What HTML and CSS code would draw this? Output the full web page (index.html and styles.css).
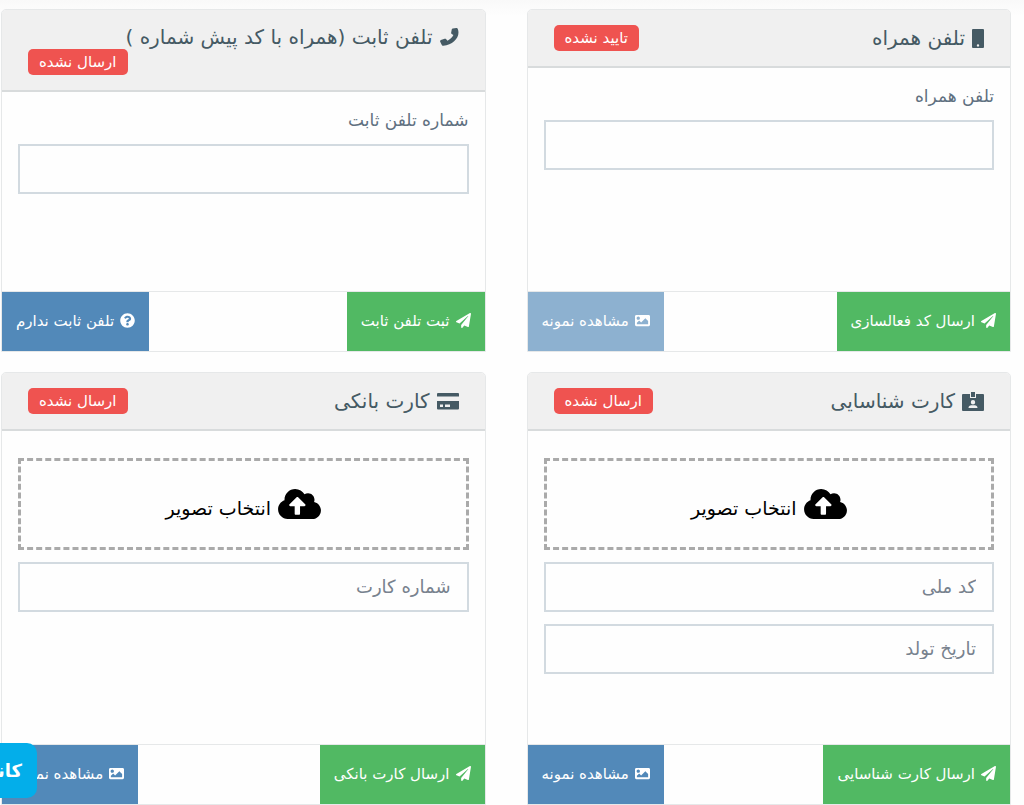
FILE: index.html
```html
<!DOCTYPE html>
<html lang="fa" dir="rtl">
<head>
<meta charset="utf-8">
<meta name="viewport" content="width=device-width, initial-scale=1">
<title>احراز هویت</title>
<link rel="stylesheet" href="styles.css">
</head>
<body>
<svg class="sprite" aria-hidden="true">
  <symbol id="plane" viewBox="0 0 512 512"><path d="M476 3.2L12.5 270.6c-18.1 10.4-15.8 35.6 2.2 43.2L121 358.4l287.3-253.2c5.5-4.9 13.3 2.6 8.6 8.3L176 407v80.5c0 23.6 28.5 32.9 42.5 15.8L282 426l124.6 52.2c14.2 6 30.4-2.9 33-18.2l72-432C515 7.8 493.3-6.8 476 3.2z"/></symbol>
  <symbol id="image" viewBox="0 0 512 512"><path d="M464 448H48c-26.5 0-48-21.500-48-48V112c0-26.500 21.500-48 48-48h416c26.500 0 48 21.500 48 48v288c0 26.500-21.500 48-48 48zM112 120c-30.900 0-56 25.100-56 56s25.100 56 56 56 56-25.100 56-56-25.100-56-56-56zM64 384h384V272l-87.500-87.500c-4.700-4.700-12.300-4.700-17 0L208 320l-55.500-55.500c-4.700-4.700-12.300-4.700-17 0L64 336v48z"/></symbol>
  <symbol id="question" viewBox="0 0 512 512"><path d="M504 256c0 137-111 248-248 248S8 393 8 256C8 119.100 119 8 256 8s248 111.100 248 248zM262.700 90c-54.500 0-89.300 23-116.600 63.800-3.500 5.300-2.400 12.400 2.700 16.200l34.700 26.300c5.200 3.900 12.600 3 16.700-2.100 17.900-22.700 30.100-35.800 57.300-35.800 20.400 0 45.700 13.100 45.700 33 0 15-12.400 22.700-32.500 34C247.100 238.500 216 254.900 216 296v4c0 6.600 5.400 12 12 12h56c6.600 0 12-5.400 12-12v-1.300c0-28.500 83.200-29.600 83.200-106.700 0-58-60.200-102-116.500-102zM256 338c-25.400 0-46 20.600-46 46s20.600 46 46 46 46-20.600 46-46-20.600-46-46-46z"/></symbol>
  <symbol id="phone" viewBox="0 0 19 18"><path d="M12.800.5L16.200 0c.7-.1 1.300.2 1.600.9 3 7.600-4.300 16-14.400 16.900-.7 0-1.300-.3-1.600-.9L.2 13.800c-.3-.7 0-1.400.7-1.700l3.700-1.300c.6-.2 1.200-.1 1.600.4l1.300 1.500c2.600-1.200 4.700-3.100 5.900-5.600L11.700 6c-.5-.4-.7-.9-.5-1.500l.6-3.200c.1-.4.5-.7 1-.8z"/></symbol>
  <symbol id="mobile" viewBox="0 0 12 19"><path fill-rule="evenodd" d="M1 0h10a1 1 0 0 1 1 1v17a1 1 0 0 1-1 1H1a1 1 0 0 1-1-1V1a1 1 0 0 1 1-1zM6 15.200a1.200 1.200 0 1 0 0 2.400 1.200 1.200 0 0 0 0-2.400z"/></symbol>
  <symbol id="card" viewBox="0 0 22 19"><path fill-rule="evenodd" d="M1 1h20a1 1 0 0 1 1 1v2.500H0V2a1 1 0 0 1 1-1zM0 9h22v7.500a1 1 0 0 1-1 1H1a1 1 0 0 1-1-1zM3 12.500V15h3v-2.500zM8 12.500V15h5v-2.500z"/></symbol>
  <symbol id="badge" viewBox="0 0 22 19"><path fill-rule="evenodd" d="M1 2h7v4h6V2h7a1 1 0 0 1 1 1v15a1 1 0 0 1-1 1H1a1 1 0 0 1-1-1V3a1 1 0 0 1 1-1zM9 0h4v5H9zM11 8a2.200 2.200 0 1 0 0 4.400A2.200 2.200 0 0 0 11 8zM6.500 16h9c0-1.800-1.200-2.800-2.700-2.800H9.200c-1.500 0-2.700 1-2.700 2.800z"/></symbol>
  <symbol id="cloud" viewBox="0 32 640 448"><path d="M537.600 226.600c4.100-10.700 6.400-22.400 6.400-34.600 0-53-43-96-96-96-19.700 0-38.100 6-53.300 16.200C367 64.200 315.300 32 256 32c-88.400 0-160 71.600-160 160 0 2.700.1 5.400.2 8.100C40.200 219.800 0 273.200 0 336c0 79.500 64.500 144 144 144h368c70.700 0 128-57.300 128-128 0-61.900-44-113.600-102.400-125.400zM393.400 288H328v112c0 8.800-7.200 16-16 16h-48c-8.800 0-16-7.200-16-16V288h-65.400c-14.300 0-21.400-17.200-11.300-27.300l105.400-105.400c6.200-6.200 16.400-6.200 22.600 0l105.400 105.400c10.100 10.100 2.900 27.300-11.300 27.300z"/></symbol>
</svg>

<main class="grid">
  <section class="card">
    <header class="card-head">
      <h2 class="title"><svg class="icon-mobile"><use href="#mobile"/></svg>تلفن همراه</h2>
      <span class="status">تایید نشده</span>
    </header>
    <div class="card-body">
      <label class="label" for="mobile-no">تلفن همراه</label>
      <input class="field" id="mobile-no" type="tel">
    </div>
    <footer class="card-foot">
      <button class="btn btn-green" type="button"><svg class="icon"><use href="#plane"/></svg>ارسال کد فعالسازی</button>
      <button class="btn btn-blue" type="button" disabled><svg class="icon"><use href="#image"/></svg>مشاهده نمونه</button>
    </footer>
  </section>

  <section class="card">
    <header class="card-head">
      <h2 class="title"><svg class="icon-phone"><use href="#phone"/></svg>تلفن ثابت (همراه با کد پیش شماره )</h2>
      <span class="status">ارسال نشده</span>
    </header>
    <div class="card-body">
      <label class="label" for="phone-no">شماره تلفن ثابت</label>
      <input class="field" id="phone-no" type="tel">
    </div>
    <footer class="card-foot">
      <button class="btn btn-green" type="button"><svg class="icon"><use href="#plane"/></svg>ثبت تلفن ثابت</button>
      <button class="btn btn-blue" type="button"><svg class="icon"><use href="#question"/></svg>تلفن ثابت ندارم</button>
    </footer>
  </section>

  <section class="card card-tall">
    <header class="card-head">
      <h2 class="title"><svg class="icon-card"><use href="#badge"/></svg>کارت شناسایی</h2>
      <span class="status">ارسال نشده</span>
    </header>
    <div class="card-body card-body-upload">
      <label class="upload"><input class="file" type="file"><svg class="icon-cloud"><use href="#cloud"/></svg>انتخاب تصویر</label>
      <input class="field" type="text" placeholder="کد ملی" aria-label="کد ملی">
      <input class="field" type="text" placeholder="تاریخ تولد" aria-label="تاریخ تولد">
    </div>
    <footer class="card-foot">
      <button class="btn btn-green" type="button"><svg class="icon"><use href="#plane"/></svg>ارسال کارت شناسایی</button>
      <button class="btn btn-blue" type="button"><svg class="icon"><use href="#image"/></svg>مشاهده نمونه</button>
    </footer>
  </section>

  <section class="card card-tall">
    <header class="card-head">
      <h2 class="title"><svg class="icon-card"><use href="#card"/></svg>کارت بانکی</h2>
      <span class="status">ارسال نشده</span>
    </header>
    <div class="card-body card-body-upload">
      <label class="upload"><input class="file" type="file"><svg class="icon-cloud"><use href="#cloud"/></svg>انتخاب تصویر</label>
      <input class="field" type="text" placeholder="شماره کارت" aria-label="شماره کارت">
    </div>
    <footer class="card-foot">
      <button class="btn btn-green" type="button"><svg class="icon"><use href="#plane"/></svg>ارسال کارت بانکی</button>
      <button class="btn btn-blue" type="button"><svg class="icon"><use href="#image"/></svg>مشاهده نمونه</button>
    </footer>
  </section>
</main>
<a class="channel" href="#">کانال</a>
</body>
</html>
```
FILE: styles.css
```css
* { box-sizing: border-box; }

body {
  margin: 0;
  background: #fefefe;
  font-family: "DejaVu Sans", sans-serif;
  font-size: 16px;
  color: #455a64;
}

.sprite { position: absolute; width: 0; height: 0; }
svg { fill: currentColor; flex: none; }

.grid {
  display: grid;
  grid-template-columns: 1fr 1fr;
  gap: 20px 41px;
  padding: 9px 13px 0 1px;
  background: linear-gradient(#f9f9f9, #fefefe 16px);
}

.card {
  display: flex;
  flex-direction: column;
  min-height: 343px;
  border: 1px solid #e6e8e9;
  border-radius: 5px 5px 0 0;
  background: #fefefe;
}
.card-tall { min-height: 433px; }

.card-head {
  display: flex;
  flex-wrap: wrap;
  align-items: center;
  column-gap: 8px;
  padding: 15px 26px;
  border-bottom: 2px solid #d8dbdc;
  border-radius: 4px 4px 0 0;
  background: #f0f0f0;
}

.title {
  display: flex;
  align-items: center;
  gap: 7px;
  margin: 0;
  font-size: 20px;
  font-weight: 400;
  line-height: 24px;
  white-space: nowrap;
}

.icon-mobile { width: 12px; height: 19px; }
.icon-phone { width: 19px; height: 18px; }
.icon-card { width: 22px; height: 19px; }

.status {
  margin-right: auto;
  padding: 0 11px;
  border-radius: 5px;
  background: #ef5350;
  color: #fff;
  font-size: 15px;
  line-height: 26px;
}

.card-body {
  display: flex;
  flex: 1;
  flex-direction: column;
  padding: 16px;
}
.card-body-upload { gap: 12px; padding-top: 27px; }

.label {
  margin-bottom: 12px;
  color: #607080;
  font-size: 17px;
  line-height: 24px;
}

.field {
  width: 100%;
  height: 50px;
  padding: 0 16px 2px;
  border: 2px solid #d2dae0;
  border-radius: 0;
  background: #fefefe;
  color: #455a64;
  font: inherit;
  font-size: 18px;
}
.field::placeholder { color: #78828e; opacity: 1; }

.upload {
  display: flex;
  flex-wrap: wrap;
  align-items: flex-end;
  align-content: center;
  justify-content: center;
  gap: 7px;
  height: 92px;
  border: 3px dashed #aaa;
  color: #000;
  font-size: 19px;
}
.file {
  position: absolute;
  width: 1px;
  height: 1px;
  opacity: 0;
}
.icon-cloud { width: 43px; height: 30px; }

.card-foot {
  display: flex;
  justify-content: space-between;
  border-top: 1px solid #e6e8e9;
}

.btn {
  display: flex;
  align-items: center;
  gap: 6px;
  height: 59px;
  padding: 0 14px 2px;
  border: 0;
  color: #fff;
  font: inherit;
  font-size: 15px;
  white-space: nowrap;
}
.btn-green { background: #51b963; }
.btn-blue { background: #5289b9; }
.btn-blue:disabled { background: #8db1d0; }
.icon { width: 15px; height: 15px; }

.channel {
  position: fixed;
  bottom: 7px;
  left: 0;
  width: 37px;
  padding-right: 15px;
  overflow: hidden;
  border-radius: 0 10px 10px 0;
  background: #03aeea;
  color: #fff;
  font-size: 18px;
  font-weight: 700;
  line-height: 55px;
  text-decoration: none;
  white-space: nowrap;
}
```
